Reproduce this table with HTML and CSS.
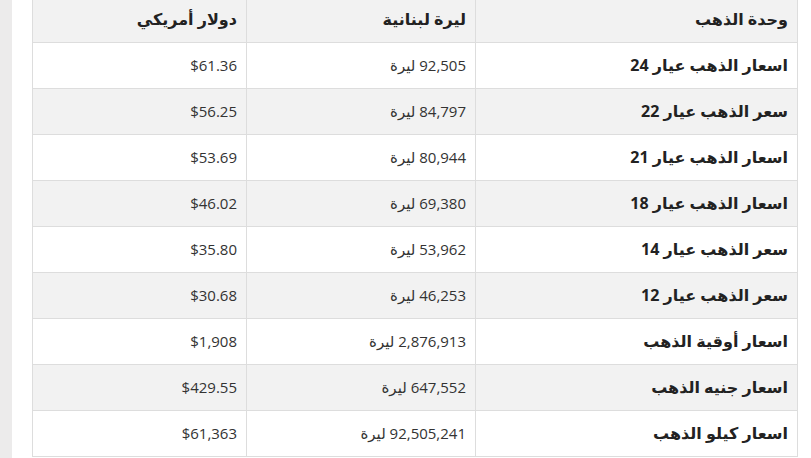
FILE: index.html
```html
<!DOCTYPE html>
<html lang="ar">
<head>
<meta charset="utf-8">
<link rel="stylesheet" href="styles.css">
</head>
<body>
<div class="page">
  <aside class="strip"></aside>
  <main class="content">
    <table class="gold" dir="rtl">
      <colgroup>
        <col class="c-unit">
        <col class="c-lbp">
        <col class="c-usd">
      </colgroup>
      <thead>
        <tr><th>وحدة الذهب</th><th>ليرة لبنانية</th><th>دولار أمريكي</th></tr>
      </thead>
      <tbody>
        <tr><td class="unit">اسعار الذهب عيار 24</td><td>92,505 ليرة</td><td>$61.36</td></tr>
        <tr><td class="unit">سعر الذهب عيار 22</td><td>84,797 ليرة</td><td>$56.25</td></tr>
        <tr><td class="unit">اسعار الذهب عيار 21</td><td>80,944 ليرة</td><td>$53.69</td></tr>
        <tr><td class="unit">اسعار الذهب عيار 18</td><td>69,380 ليرة</td><td>$46.02</td></tr>
        <tr><td class="unit">سعر الذهب عيار 14</td><td>53,962 ليرة</td><td>$35.80</td></tr>
        <tr><td class="unit">سعر الذهب عيار 12</td><td>46,253 ليرة</td><td>$30.68</td></tr>
        <tr><td class="unit">اسعار أوقية الذهب</td><td>2,876,913 ليرة</td><td>$1,908</td></tr>
        <tr><td class="unit">اسعار جنيه الذهب</td><td>647,552 ليرة</td><td>$429.55</td></tr>
        <tr><td class="unit">اسعار كيلو الذهب</td><td>92,505,241 ليرة</td><td>$61,363</td></tr>
      </tbody>
    </table>
  </main>
</div>
</body>
</html>
```
FILE: styles.css
```css
html, body {
  margin: 0;
  padding: 0;
  background: #ffffff;
}
body {
  font-family: "Open Sans", "DejaVu Sans", sans-serif;
  color: #333333;
  font-size: 15px;
}
.page {
  display: flex;
  flex-direction: row;
  min-height: 458px;
  overflow: hidden;
}
.strip {
  width: 12px;
  background: #ecebeb;
  flex: none;
}
.content {
  flex: 1;
  padding: 0 0 0 20px;
}
.gold {
  width: 765px;
  border-collapse: collapse;
  margin-top: -5px;
  table-layout: fixed;
}
.c-unit { width: 322px; }
.c-lbp { width: 229px; }
.c-usd { width: 214px; }
.gold th, .gold td {
  border: 1px solid #dddddd;
  text-align: right;
  padding: 12px 9px;
  line-height: 21px;
  white-space: nowrap;
}
.gold thead th {
  background: #f2f2f2;
  font-weight: bold;
  font-size: 16px;
  color: #222222;
  padding-top: 13px;
}
.gold tbody tr:nth-child(even) td {
  background: #f2f2f2;
}
.gold td.unit {
  font-weight: bold;
  color: #222222;
  font-size: 16px;
}
```
